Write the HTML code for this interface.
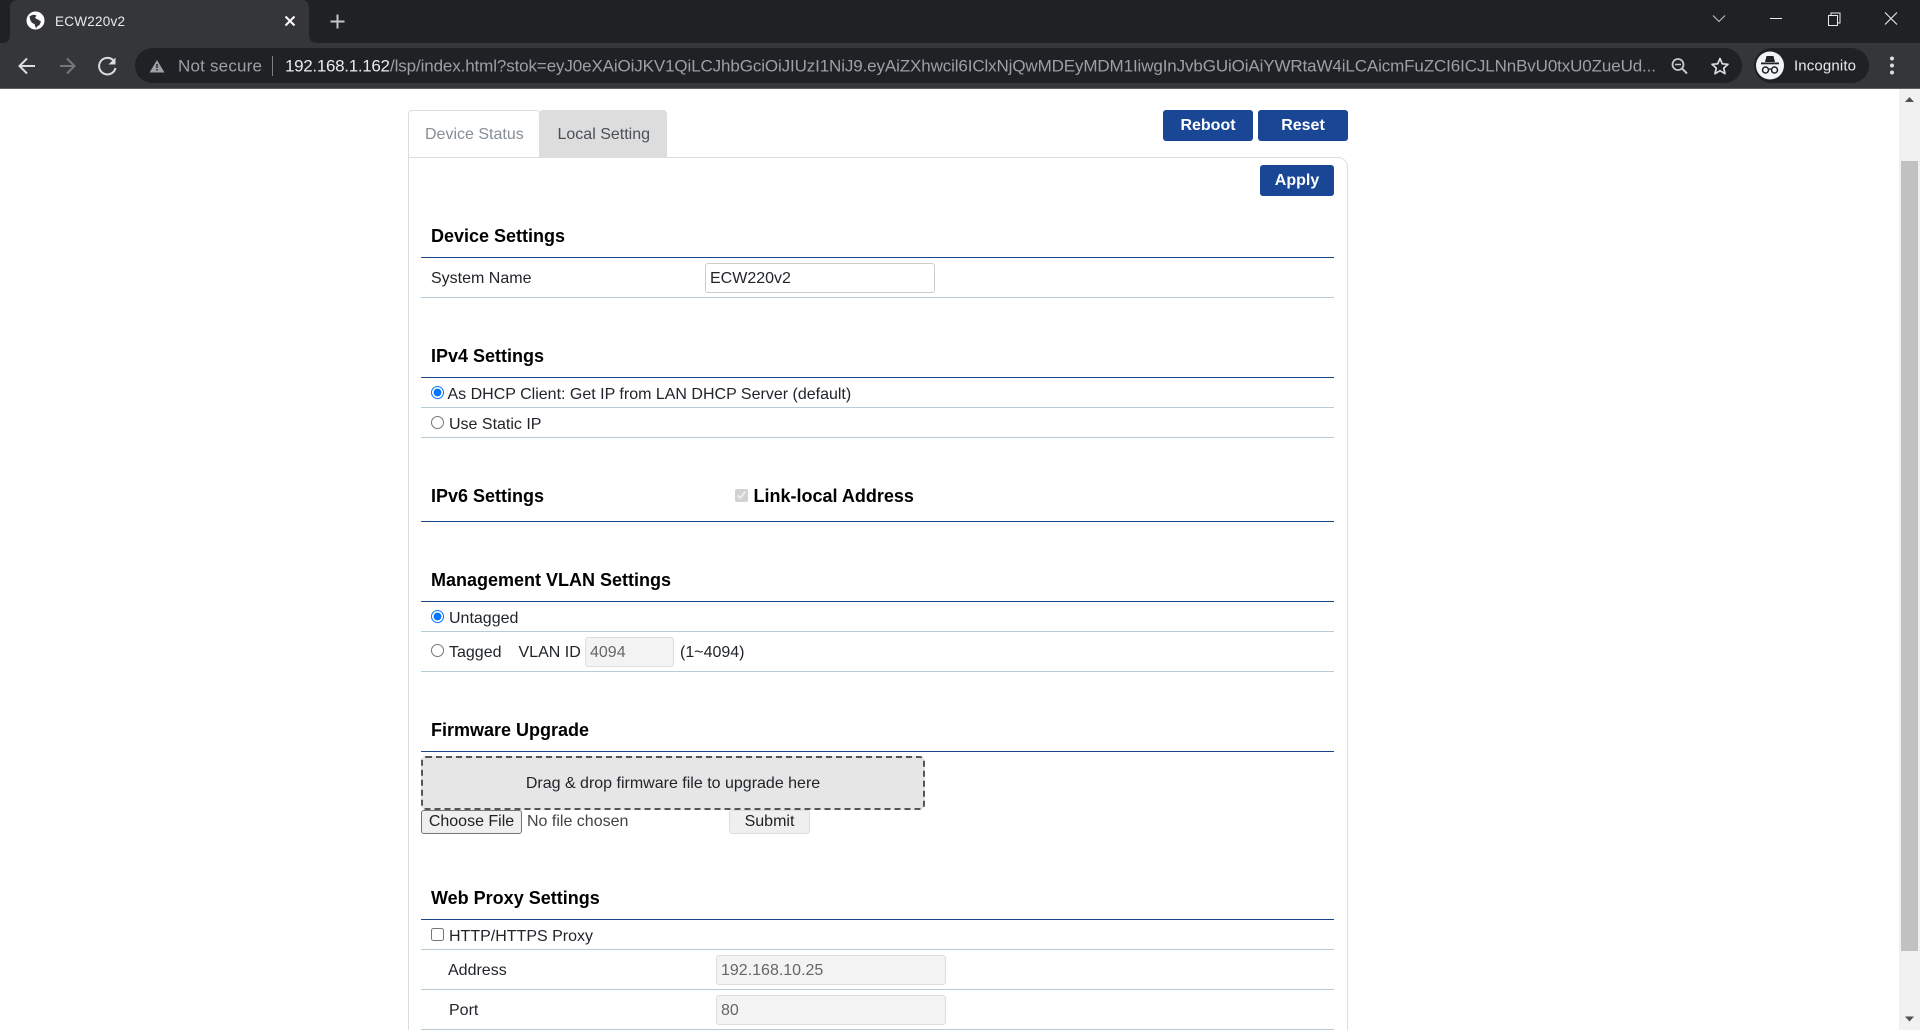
<!DOCTYPE html>
<html><head><meta charset="utf-8"><title>ECW220v2</title>
<style>
html,body{margin:0;padding:0;width:1920px;height:1030px;overflow:hidden;background:#fff}
body{position:relative;font-family:"Liberation Sans",sans-serif;font-size:16px;color:#212529}
.a{position:absolute}
.t{position:absolute;height:20px;line-height:24px;white-space:nowrap}
.h{position:absolute;height:22px;line-height:22px;white-space:nowrap;font-weight:bold;font-size:18px;color:#000;left:431px}
.bl{position:absolute;left:421px;width:913px;height:1px;background:#1a4690}
.gl{position:absolute;left:421px;width:913px;height:1px;background:#b8ccd8}
.btn{position:absolute;background:#1a4696;color:#fff;font-weight:bold;font-size:16px;text-align:center;border-radius:3px;height:31px;line-height:31px;top:110px}
.inp{position:absolute;box-sizing:border-box;height:30px;line-height:29px;border:1px solid #ccc;border-radius:3px;padding-left:4px;color:#212529}
.dis{background:#f3f3f3;border-color:#ddd;color:#666}
input{position:absolute;margin:0;width:13px;height:13px}
svg text{font-family:"Liberation Sans",sans-serif}
</style></head><body>

<svg class="a" style="left:0;top:0" width="1920" height="89" viewBox="0 0 1920 89" xmlns="http://www.w3.org/2000/svg">
<rect width="1920" height="89" fill="#202124"/>
<rect y="43" width="1920" height="45" fill="#35363a"/>
<rect y="88" width="1920" height="1" fill="#5f6063"/>
<path d="M0 43H2Q10 43 10 35V8Q10 0 18 0H301Q309 0 309 8V35Q309 43 317 43H0Z" fill="#35363a"/>
<circle cx="35.500" cy="20.500" r="9" fill="#fff"/>
<path d="M29.500 16.500Q33 13.500 36.500 15.500L35 18Q39 20 41 21.500L39.500 25Q37 26 36 28.500L34.500 24Q31 23 30 19Z" fill="#35363a"/>
<text x="55" y="26" font-size="13.500" fill="#e8eaed" textLength="70">ECW220v2</text>
<path d="M285.500 16.500l9 9M294.500 16.500l-9 9" stroke="#fff" stroke-width="2"/>
<path d="M337.500 14.500v14M330.500 21.500h14" stroke="#c4c7c5" stroke-width="2"/>

<path d="M35 66H20M27 58.500L19.500 66l7.500 7.500" fill="none" stroke="#dadce0" stroke-width="2"/>
<path d="M60 66H75M67 58.500L74.500 66 67 73.500" fill="none" stroke="#75777a" stroke-width="2"/>
<path d="M113.500 60.500A8.300 8.300 0 1 0 115.500 68" fill="none" stroke="#dadce0" stroke-width="2"/>
<path d="M115.500 57.500v7h-7z" fill="#dadce0"/>

<rect x="135" y="48" width="1607" height="35" rx="17.500" fill="#202124"/>
<path d="M157 60l7.500 12.500h-15z" fill="#9aa0a6"/>
<rect x="156.300" y="64" width="1.400" height="4" fill="#202124"/><rect x="156.300" y="69" width="1.400" height="1.500" fill="#202124"/>
<text x="178" y="71.500" font-size="17" fill="#9aa0a6" textLength="84">Not secure</text>
<rect x="272" y="56" width="1" height="20" fill="#7c7f83"/>
<text x="285" y="71.500" font-size="17" fill="#e8eaed" textLength="105">192.168.1.162</text>
<text x="390" y="71.500" font-size="17" fill="#9aa0a6" textLength="1266">/lsp/index.html?stok=eyJ0eXAiOiJKV1QiLCJhbGciOiJIUzI1NiJ9.eyAiZXhwcil6IClxNjQwMDEyMDM1IiwgInJvbGUiOiAiYWRtaW4iLCAicmFuZCI6ICJLNnBvU0txU0ZueUd...</text>
<circle cx="1678" cy="64.500" r="5.500" fill="none" stroke="#c4c7c5" stroke-width="1.800"/>
<path d="M1682 68.500l5 5" stroke="#c4c7c5" stroke-width="2"/>
<path d="M1675 64.500h6" stroke="#c4c7c5" stroke-width="1.500"/>
<path d="M1720 58.500l2.300 5.300 5.700.5-4.300 3.800 1.300 5.600-5-3-5 3 1.300-5.600-4.300-3.800 5.700-.5z" fill="none" stroke="#dadce0" stroke-width="1.700" stroke-linejoin="round"/>
<rect x="1754" y="48" width="115" height="35" rx="17.500" fill="#202124"/>
<circle cx="1770" cy="65.500" r="14" fill="#f1f3f4"/>
<path d="M1765 62l1.500-6h7l1.500 6z" fill="#202124"/>
<rect x="1761" y="62.500" width="18" height="1.800" fill="#202124"/>
<circle cx="1765.500" cy="70" r="3" fill="none" stroke="#202124" stroke-width="1.500"/>
<circle cx="1774.500" cy="70" r="3" fill="none" stroke="#202124" stroke-width="1.500"/>
<path d="M1768.500 69.500q1.500-1 3 0" fill="none" stroke="#202124" stroke-width="1.200"/>
<text x="1794" y="70.500" font-size="15" fill="#e8eaed" textLength="62">Incognito</text>
<circle cx="1892" cy="58.500" r="2" fill="#dadce0"/><circle cx="1892" cy="65.500" r="2" fill="#dadce0"/><circle cx="1892" cy="72.500" r="2" fill="#dadce0"/>

<path d="M1713 15.500l6 6 6-6" fill="none" stroke="#c4c7c5" stroke-width="1"/>
<path d="M1770 18.500h12" stroke="#e8eaed" stroke-width="1"/>
<path d="M1828.500 15.500h9v10h-9zM1831 15.500v-2.500h9v10h-2.500" fill="none" stroke="#e8eaed" stroke-width="1"/>
<path d="M1885 12.500l12 12M1897 12.500l-12 12" stroke="#e8eaed" stroke-width="1.100"/>
</svg>

<!-- scrollbar -->
<div class="a" style="left:1899px;top:89px;width:21px;height:941px;background:#f1f1f1"></div>
<div class="a" style="left:1901px;top:161px;width:17px;height:790px;background:#c1c1c1"></div>
<svg class="a" style="left:1899px;top:88px" width="21" height="942" xmlns="http://www.w3.org/2000/svg">
<path d="M10.500 9l4.500 5h-9z" fill="#505050"/><path d="M10.500 933.500l-4.500-5h9z" fill="#505050"/></svg>

<!-- tabs -->
<div class="a" style="left:408px;top:110px;box-sizing:border-box;width:132px;height:48px;border:1px solid #ddd;border-bottom:0;border-radius:4px 4px 0 0"></div>
<div class="a" style="left:539px;top:110px;width:128px;height:48px;background:#ddd;border-radius:4px 4px 0 0"></div>
<div class="t" style="left:425px;top:123px;color:#868e96">Device Status</div>
<div class="t" style="left:557.500px;top:123px;color:#495057">Local Setting</div>
<div class="btn" style="left:1163px;width:90px">Reboot</div>
<div class="btn" style="left:1258px;width:90px;">Reset</div>

<!-- card -->
<div class="a" style="left:408px;top:157px;box-sizing:border-box;width:940px;height:900px;border:1px solid #ddd;border-radius:0 10px 0 0"></div>
<div class="a" style="left:539px;top:157px;width:128px;height:1px;background:#ddd"></div>
<div class="btn" style="left:1260px;width:74px;top:165px">Apply</div>

<div class="h" style="top:225px">Device Settings</div>
<div class="bl" style="top:257px"></div>
<div class="t" style="left:431px;top:267px">System Name</div>
<div class="inp" style="left:705px;top:263px;width:230px;">ECW220v2</div>
<div class="gl" style="top:297px"></div>

<div class="h" style="top:345px">IPv4 Settings</div>
<div class="bl" style="top:377px"></div>
<input type="radio" name="a" checked style="left:431px;top:386px">
<div class="t" style="left:447.500px;top:383px">As DHCP Client: Get IP from LAN DHCP Server (default)</div>
<div class="gl" style="top:407px"></div>
<input type="radio" name="a" style="left:431px;top:416px">
<div class="t" style="left:449px;top:413px">Use Static IP</div>
<div class="gl" style="top:437px"></div>

<div class="h" style="top:485px">IPv6 Settings</div>
<input type="checkbox" checked disabled style="left:735px;top:489px">
<div class="h" style="left:753.500px;top:485px">Link-local Address</div>
<div class="bl" style="top:521px"></div>

<div class="h" style="top:569px">Management VLAN Settings</div>
<div class="bl" style="top:601px"></div>
<input type="radio" name="b" checked style="left:431px;top:610px">
<div class="t" style="left:449px;top:607px">Untagged</div>
<div class="gl" style="top:631px"></div>
<input type="radio" name="b" style="left:431px;top:644px">
<div class="t" style="left:449px;top:641px">Tagged</div>
<div class="t" style="left:518.500px;top:641px">VLAN ID</div>
<div class="inp dis" style="left:585px;top:637px;width:89px">4094</div>
<div class="t" style="left:680px;top:641px">(1~4094)</div>
<div class="gl" style="top:671px"></div>

<div class="h" style="top:719px">Firmware Upgrade</div>
<div class="bl" style="top:751px"></div>
<div class="a" style="left:421px;top:756px;box-sizing:border-box;width:504px;height:54px;background:#e6e6e6;border:2px dashed #555;border-radius:5px"></div>
<div class="t" style="left:421px;width:504px;text-align:center;top:772px">Drag &amp; drop firmware file to upgrade here</div>
<div class="a" style="left:421px;top:810px;box-sizing:border-box;width:101px;height:24px;background:#efefef;border:1px solid #767676;border-radius:3px;text-align:center;line-height:22px;color:#222">Choose File</div>
<div class="t" style="left:527px;top:810px;color:#444">No file chosen</div>
<div class="a" style="left:729px;top:810px;box-sizing:border-box;width:81px;height:24px;background:#efefef;border:1px solid #ddd;border-radius:3px;text-align:center;line-height:21px;color:#222">Submit</div>

<div class="h" style="top:887px">Web Proxy Settings</div>
<div class="bl" style="top:919px"></div>
<input type="checkbox" style="left:431px;top:928px">
<div class="t" style="left:449px;top:925px">HTTP/HTTPS Proxy</div>
<div class="gl" style="top:949px"></div>
<div class="t" style="left:448px;top:959px">Address</div>
<div class="inp dis" style="left:716px;top:955px;width:230px">192.168.10.25</div>
<div class="gl" style="top:989px"></div>
<div class="t" style="left:449px;top:999px">Port</div>
<div class="inp dis" style="left:716px;top:995px;width:230px">80</div>
<div class="gl" style="top:1029px"></div>
</body></html>
